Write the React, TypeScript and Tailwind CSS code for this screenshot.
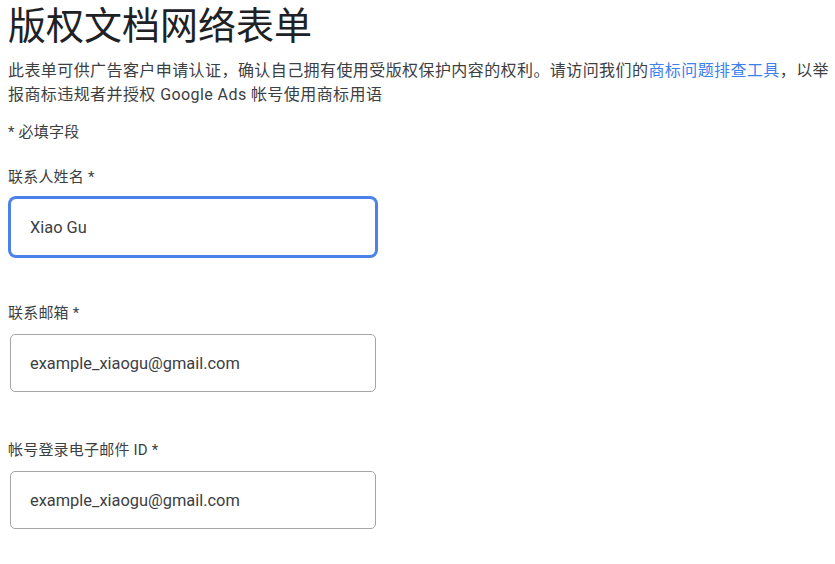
import React from "react";

const font = "font-['Roboto','Noto_Sans_CJK_SC',sans-serif]";

function Field({
  label,
  value,
  focused,
  labelMt,
}: {
  label: string;
  value: string;
  focused?: boolean;
  labelMt: string;
}) {
  return (
    <div className={labelMt}>
      <label className="block text-[15px] leading-6 text-[#3c4043] tracking-[0.2px]">
        {label}
      </label>
      <div className="mt-[9px] ml-[2px] w-[366px]">
        <input
          readOnly
          value={value}
          className={
            focused
              ? "block w-full h-[58px] rounded-[6px] border border-[#4a82e9] shadow-[0_0_0_2px_#4a82e9] px-[19px] text-[16.4px] text-[#3c4043] outline-none bg-white " +
                font
              : "block w-full h-[58px] rounded-[5px] border border-[#a2a6ab] px-[19px] text-[16.4px] text-[#3c4043] outline-none bg-white " +
                font
          }
        />
      </div>
    </div>
  );
}

export default function App() {
  return (
    <div className={"w-[835px] h-[564px] bg-white px-2 pt-[2px] overflow-hidden " + font}>
      <h1 className="text-[38px] leading-[48px] font-normal text-[#202124]">
        版权文档网络表单
      </h1>
      <p className="mt-[9px] text-[16px] leading-6 text-[#3c4043] tracking-[0.42px] whitespace-nowrap">
        此表单可供广告客户申请认证，确认自己拥有使用受版权保护内容的权利。请访问我们的
        <a className="text-[#3d7fee]">商标问题排查工具</a>，以举
        <br />
        报商标违规者并授权 Google Ads 帐号使用商标用语
      </p>
      <p className="mt-[13px] text-[15px] leading-6 text-[#3c4043] tracking-[0.2px]">
        * 必填字段
      </p>
      <Field label="联系人姓名 *" value="Xiao Gu" focused labelMt="mt-[21px]" />
      <Field
        label="联系邮箱 *"
        value="example_xiaogu@gmail.com"
        labelMt="mt-[45px]"
      />
      <Field
        label="帐号登录电子邮件 ID *"
        value="example_xiaogu@gmail.com"
        labelMt="mt-[46px]"
      />
    </div>
  );
}
